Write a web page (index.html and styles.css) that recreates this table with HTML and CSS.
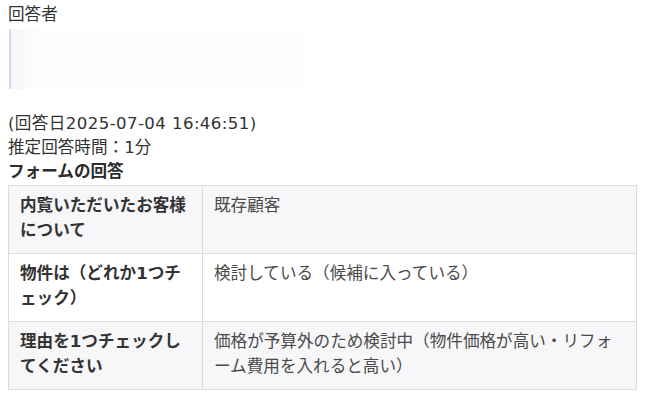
FILE: index.html
```html
<!DOCTYPE html>
<html lang="ja">
<head>
<meta charset="utf-8">
<title>回答</title>
<link rel="stylesheet" href="styles.css">
</head>
<body>
<div class="page">
  <div class="line">回答者</div>
  <div class="respondent"></div>
  <div class="spacer"></div>
  <div class="line date">(回答日2025-07-04 16:46:51)</div>
  <div class="line">推定回答時間：1分</div>
  <div class="line heading">フォームの回答</div>
  <table class="answers">
    <tr class="odd">
      <th>内覧いただいたお客様について</th>
      <td>既存顧客</td>
    </tr>
    <tr>
      <th>物件は（どれか1つチェック）</th>
      <td>検討している（候補に入っている）</td>
    </tr>
    <tr class="odd">
      <th>理由を1つチェックしてください</th>
      <td>価格が予算外のため検討中（物件価格が高い・リフォーム費用を入れると高い）</td>
    </tr>
  </table>
</div>
</body>
</html>
```

FILE: styles.css
```css
html, body {
  margin: 0;
  padding: 0;
  background: #ffffff;
}

body {
  font-family: "DejaVu Sans", "Noto Sans CJK JP", sans-serif;
  font-size: 16.6px;
  color: #333333;
  line-height: 24px;
}

.page {
  padding: 3px 10px 0 8px;
}

.line {
  height: 24px;
  white-space: nowrap;
}

.date {
  letter-spacing: 0.4px;
}

.heading {
  font-weight: bold;
  color: #2b2b2b;
}

.respondent {
  margin-top: 2px;
  margin-left: 1px;
  width: 294px;
  height: 60px;
  border-left: 2px solid #d6d6ea;
  background: linear-gradient(90deg, #f6f6f9 0px, #fdfdfe 30px, #fefefe 100%);
}

.spacer {
  height: 23px;
}

.answers {
  margin-top: 1px;
  width: 629px;
  border-collapse: collapse;
  table-layout: fixed;
  line-break: normal;
}

.answers th,
.answers td {
  border: 1px solid #dcdcdc;
  vertical-align: top;
  text-align: left;
  padding: 7px 11px 10px 11px;
  line-height: 25px;
}

.answers th {
  width: 171px;
  font-weight: bold;
  color: #333333;
}

.answers td {
  color: #4a4a4a;
}

.answers tr.odd {
  background: #f7f7f9;
}
```
